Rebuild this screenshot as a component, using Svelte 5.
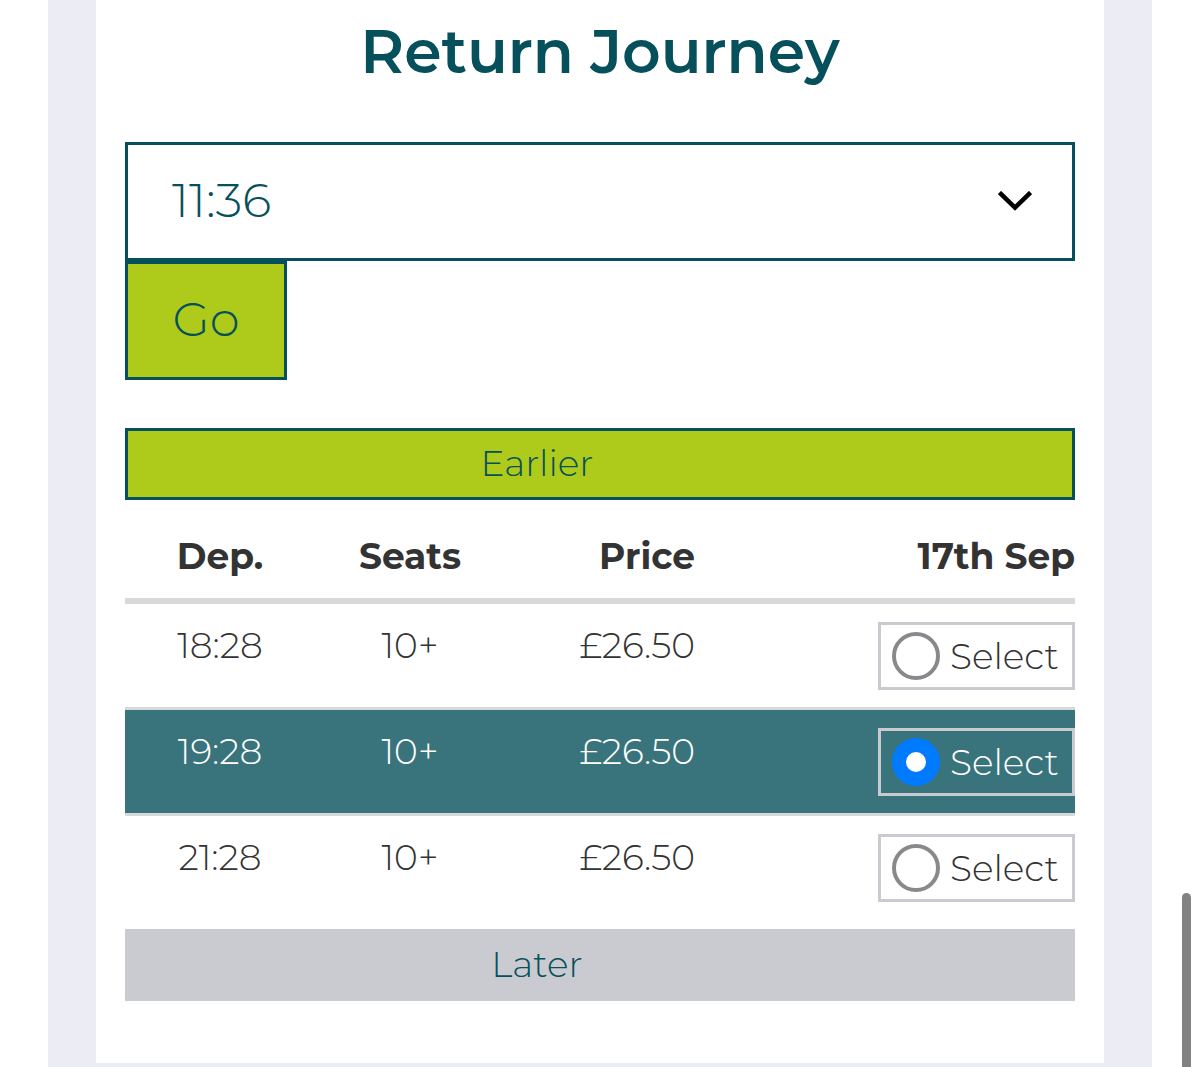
<script lang="ts">
	interface Journey {
		id: string;
		departs: string;
		seats: string;
		price: string;
	}

	const times = ['11:36', '12:28', '13:28', '14:28'];

	const journeys: Journey[] = [
		{ id: 'r1828', departs: '18:28', seats: '10+', price: '£26.50' },
		{ id: 'r1928', departs: '19:28', seats: '10+', price: '£26.50' },
		{ id: 'r2128', departs: '21:28', seats: '10+', price: '£26.50' }
	];

	let time = $state('11:36');
	let selected = $state('r1928');
</script>

<div class="page">
	<main class="card">
		<h2 class="title">Return Journey</h2>

		<form class="time-form" onsubmit={(e) => e.preventDefault()}>
			<div class="select-wrap">
				<select bind:value={time} aria-label="Return time">
					{#each times as t}
						<option value={t}>{t}</option>
					{/each}
				</select>
				<svg class="chevron" viewBox="0 0 34 22" aria-hidden="true">
					<path d="M1.5 1.5 L17 16.5 L32.5 1.5" fill="none" stroke="#000" stroke-width="4.5" />
				</svg>
			</div>
			<button class="go" type="submit">Go</button>
		</form>

		<button class="shift earlier" type="button">Earlier</button>

		<table>
			<thead>
				<tr>
					<th>Dep.</th>
					<th>Seats</th>
					<th class="right">Price</th>
					<th class="right date">17th Sep</th>
				</tr>
			</thead>
			<tbody>
				{#each journeys as journey (journey.id)}
					<tr class:active={selected === journey.id}>
						<td>{journey.departs}</td>
						<td>{journey.seats}</td>
						<td class="right">{journey.price}</td>
						<td class="right">
							<label class="pick" for={journey.id}>
								<input
									type="radio"
									id={journey.id}
									name="return"
									value={journey.id}
									bind:group={selected}
								/>
								<span>Select</span>
							</label>
						</td>
					</tr>
				{/each}
			</tbody>
		</table>

		<button class="shift later" type="button">Later</button>
	</main>
	<div class="scroll-thumb" aria-hidden="true"></div>
</div>

<style>
	:global(body) {
		margin: 0;
		background: #fff;
	}

	.page {
		position: relative;
		box-sizing: border-box;
		min-height: 100vh;
		padding: 0 96px 4px;
		background: linear-gradient(#ecedf4, #ecedf4) center / calc(100% - 96px) 100% no-repeat;
		font-family: Montserrat, Inter, sans-serif;
		font-size: 36px;
		font-weight: 350;
		line-height: 46px;
		color: #333;
	}

	.card {
		padding: 16px 29px 62px;
		background: #fff;
	}

	.title {
		margin: 0 0 54px;
		font-size: 60px;
		font-weight: 600;
		line-height: 72px;
		text-align: center;
		color: #06505b;
	}

	.time-form {
		margin-bottom: 48px;
	}

	.select-wrap {
		display: grid;
		align-items: center;
	}

	.select-wrap > * {
		grid-area: 1 / 1;
	}

	select,
	.go {
		box-sizing: border-box;
		height: 119px;
		border: 3px solid #06505b;
		border-radius: 0;
		font-family: inherit;
		font-size: 48px;
		font-weight: inherit;
		color: #06505b;
	}

	select {
		width: 100%;
		padding: 0 44px 4px;
		appearance: none;
		background: #fff;
	}

	.chevron {
		width: 34px;
		height: 22px;
		margin-right: 43px;
		justify-self: end;
		pointer-events: none;
	}

	.go {
		display: block;
		width: 162px;
		padding: 0 0 4px;
		background: #aeca1a;
	}

	.shift {
		display: block;
		box-sizing: border-box;
		width: 100%;
		height: 72px;
		padding: 0 126px 2px 0;
		border: 3px solid #06505b;
		font-family: inherit;
		font-size: 36px;
		font-weight: inherit;
		color: #06505b;
	}

	.earlier {
		background: #aeca1a;
	}

	.later {
		margin-top: 10px;
		border-color: #cacbd1;
		background: #cacbd1;
	}

	table {
		width: 100%;
		border-collapse: separate;
		border-spacing: 0;
		table-layout: fixed;
	}

	th {
		width: 20%;
		padding: 33px 0 19px;
		border-bottom: 6px solid #d9d9d9;
		font-weight: 700;
		text-align: center;
	}

	th.date {
		width: 40%;
	}

	td {
		padding: 18px 0 17px;
		border-bottom: 3px solid #d6d8da;
		text-align: center;
		vertical-align: top;
	}

	tr:last-child td {
		border-bottom: 0;
	}

	th.right,
	td.right {
		text-align: right;
	}

	.active td {
		background: #39747d;
		background-clip: padding-box;
		color: #fff;
	}

	.pick {
		display: flex;
		align-items: center;
		gap: 10px;
		box-sizing: border-box;
		width: 197px;
		height: 68px;
		margin-left: auto;
		padding: 0 11px;
		border: 3px solid #cacbd1;
		cursor: pointer;
	}

	.pick input {
		flex: none;
		box-sizing: border-box;
		width: 48px;
		height: 48px;
		margin: 0;
		border: 4px solid #89898c;
		border-radius: 50%;
		appearance: none;
		background: #fff;
	}

	.pick input:checked {
		border: 14px solid #007aff;
	}

	.scroll-thumb {
		position: absolute;
		right: 9px;
		bottom: 0;
		width: 9px;
		height: 174px;
		border-radius: 5px 5px 0 0;
		background: #828282;
	}
</style>
